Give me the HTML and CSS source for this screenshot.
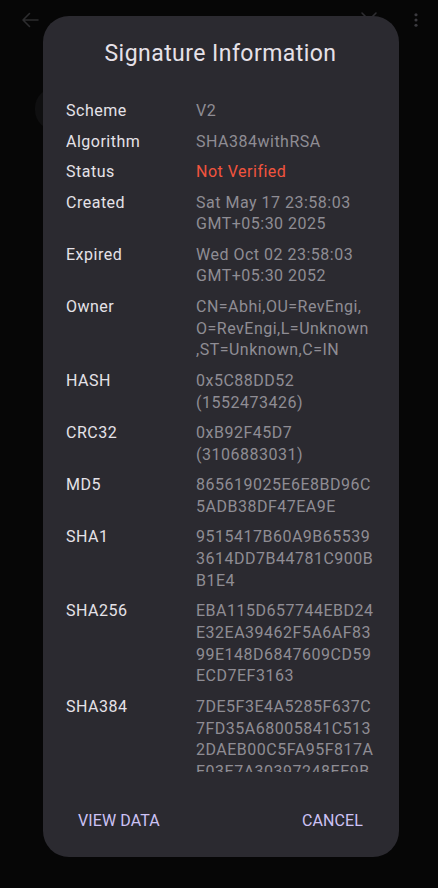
FILE: index.html
```html
<!DOCTYPE html>
<html lang="en">
<head>
<meta charset="utf-8">
<title>Signature Information</title>
<link rel="stylesheet" href="styles.css">
</head>
<body>
<div class="app">
  <header class="topbar">
    <svg class="icon back" viewBox="0 0 24 24" width="24" height="24"><path d="M20 12H5M11.5 5.5 5 12l6.5 6.5" fill="none" stroke="currentColor" stroke-width="1.6" stroke-linecap="round" stroke-linejoin="round"/></svg>
    <div class="spacer"></div>
    <svg class="icon close" viewBox="0 0 24 24" width="24" height="24"><path d="M5 5l14 14M19 5 5 19" fill="none" stroke="currentColor" stroke-width="1.6" stroke-linecap="round"/></svg>
    <svg class="icon more" viewBox="0 0 24 24" width="24" height="24"><circle cx="12" cy="5" r="2.1" fill="currentColor"/><circle cx="12" cy="12" r="2.1" fill="currentColor"/><circle cx="12" cy="19" r="2.1" fill="currentColor"/></svg>
  </header>
  <main class="app-body">
    <div class="app-icon"></div>
  </main>
</div>

<div class="scrim">
  <section class="dialog">
    <h1 class="title">Signature Information</h1>
    <div class="scroll">
      <dl class="info">
        <div class="row"><dt>Scheme</dt><dd>V2</dd></div>
        <div class="row"><dt>Algorithm</dt><dd>SHA384withRSA</dd></div>
        <div class="row"><dt>Status</dt><dd class="bad">Not Verified</dd></div>
        <div class="row"><dt>Created</dt><dd>Sat May 17 23:58:03 GMT+05:30 2025</dd></div>
        <div class="row"><dt>Expired</dt><dd>Wed Oct 02 23:58:03 GMT+05:30 2052</dd></div>
        <div class="row"><dt>Owner</dt><dd>CN=Abhi,OU=RevEngi,<wbr>O=RevEngi,L=Unknown<wbr>,ST=Unknown,C=IN</dd></div>
        <div class="row"><dt>HASH</dt><dd>0x5C88DD52 (1552473426)</dd></div>
        <div class="row"><dt>CRC32</dt><dd>0xB92F45D7 (3106883031)</dd></div>
        <div class="row"><dt>MD5</dt><dd>865619025E6E8BD96C5ADB38DF47EA9E</dd></div>
        <div class="row"><dt>SHA1</dt><dd>9515417B60A9B655393614DD7B44781C900BB1E4</dd></div>
        <div class="row"><dt>SHA256</dt><dd>EBA115D657744EBD24E32EA39462F5A6AF8399E148D6847609CD59ECD7EF3163</dd></div>
        <div class="row"><dt>SHA384</dt><dd>7DE5F3E4A5285F637C7FD35A68005841C5132DAEB00C5FA95F817AE03E7A30397248EE9B4C1D26A0F57E9B3C28D41A60E5F7</dd></div>
      </dl>
    </div>
    <div class="actions">
      <button class="btn" type="button">VIEW DATA</button>
      <button class="btn" type="button">CANCEL</button>
    </div>
  </section>
</div>
</body>
</html>
```

FILE: styles.css
```css
* { box-sizing: border-box; }

html, body {
  margin: 0;
  padding: 0;
  width: 438px;
  height: 888px;
  overflow: hidden;
  background: #060606;
  font-family: Roboto, "Noto Sans", "Liberation Sans", sans-serif;
}

.app {
  height: 888px;
  display: flex;
  flex-direction: column;
}

.topbar {
  height: 40px;
  display: flex;
  align-items: center;
  padding: 0 13px 0 18px;
  gap: 26px;
}

.icon { display: block; flex: none; }
.back { color: #2c2c2e; }
.close { color: #2e2d31; }
.more { color: #3b3a3f; width: 18px; height: 18px; }

.spacer { flex: 1; }

.app-body {
  padding: 48px 0 0 35px;
}

.app-icon {
  width: 70px;
  height: 42px;
  border-radius: 20px;
  background: #0f0f10;
}

.scrim {
  position: fixed;
  inset: 0;
  padding: 16px 0 0 43px;
}

.dialog {
  width: 356px;
  height: 841px;
  background: #2b2a30;
  border-radius: 26px;
  padding: 24px 24px 17px 23px;
  display: flex;
  flex-direction: column;
}

.title {
  margin: 0 0 32px;
  font-size: 23px;
  line-height: 28px;
  font-weight: 400;
  color: #e6e1e8;
  text-align: center;
  letter-spacing: 0.45px;
}

.scroll {
  height: 672px;
  flex: none;
  overflow: hidden;
}

.info {
  margin: 0;
  display: flex;
  flex-direction: column;
  gap: 8.8px;
}

.row {
  display: grid;
  grid-template-columns: 130px 1fr;
  font-size: 16px;
  line-height: 21.7px;
  letter-spacing: 0.5px;
}

.row dt {
  color: #e5e2e8;
}

.row dd {
  margin: 0;
  color: #8f8d94;
  overflow-wrap: anywhere;
}

.row dd.bad {
  color: #f2543e;
}

.actions {
  margin-top: 28px;
  height: 40px;
  display: flex;
  justify-content: space-between;
  align-items: center;
}

.btn {
  height: 40px;
  padding: 0 12px;
  border: 0;
  background: transparent;
  color: #cdc2f5;
  font-family: inherit;
  font-size: 16px;
  letter-spacing: 0.1px;
  font-weight: 400;
}
```
